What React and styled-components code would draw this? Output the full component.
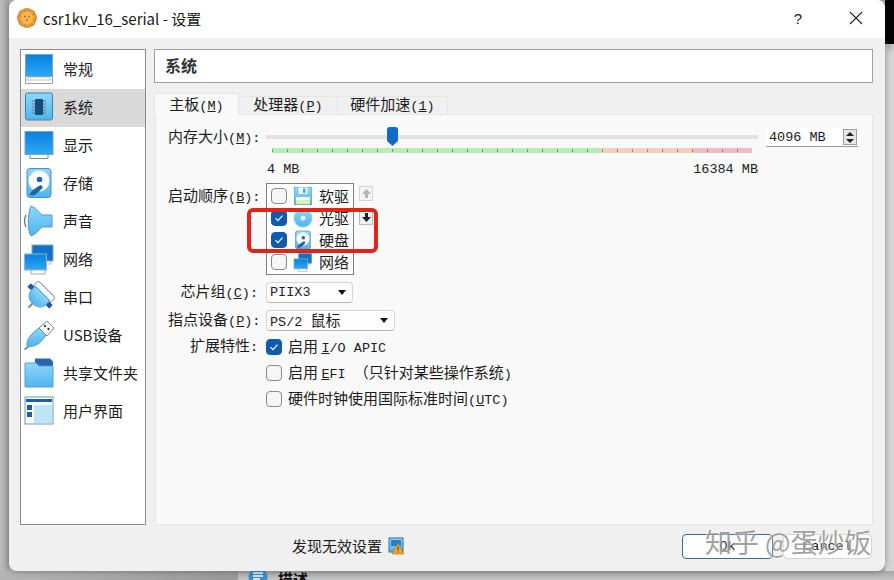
import React from "react"
import styled, { createGlobalStyle } from "styled-components"

const GlobalStyle = createGlobalStyle`
  html, body {
    margin: 0;
    padding: 0;
    background: #b4b4b4;
  }
  body {
    font-family: "Noto Sans CJK SC", "Liberation Sans", sans-serif;
    font-size: 15px;
    color: #1c1c1c;
  }
`

const Page = styled.div`
  width: 894px;
  height: 580px;
  display: grid;
  grid-template-columns: 9px 876px 9px;
  grid-template-rows: 571px 9px;
  overflow: hidden;
`

const LeftEdge = styled.div`
  background: linear-gradient(90deg, #bdbdbd, #a4a4a4);
`

const RightEdge = styled.div`
  display: flex;
  flex-direction: column;
  background: #d4d4d4;
`

const RightEdgeBlack = styled.div`
  height: 44px;
  margin-bottom: 12px;
  background: #050505;
  box-shadow: 0 8px 4px -2px #aaa;
`

const BottomEdge = styled.div`
  grid-column: 1 / 4;
  display: flex;
  overflow: hidden;
`

const BottomLeft = styled.div`
  width: 238px;
  background: linear-gradient(90deg, #b4b4b4, #999);
`

const BottomRight = styled.div`
  flex: 1;
  display: flex;
  gap: 10px;
  padding-left: 10px;
  background: linear-gradient(180deg, #a6a6a6, #c6c6c6);
`

const BottomTitle = styled.span`
  font-weight: 700;
  font-size: 15px;
  line-height: 15px;
  color: #111;
`

const Dialog = styled.div`
  position: relative;
  display: flex;
  flex-direction: column;
  background: #f0f0f0;
  border-radius: 8px;
  box-shadow: 0 0 6px rgba(0, 0, 0, 0.35);
`

const TitleBar = styled.div`
  height: 38px;
  flex: none;
  box-sizing: border-box;
  display: flex;
  align-items: center;
  padding: 0 0 2px 8px;
  background: #fff;
  border-radius: 8px 8px 0 0;
`

const TitleText = styled.span`
  margin-left: 6px;
  font-size: 15px;
  flex: 1;
  color: #1a1a1a;
`

const TitleButton = styled.button`
  width: 58px;
  height: 36px;
  padding: 0;
  border: 0;
  background: none;
  font-family: "Liberation Sans", sans-serif;
  font-size: 15px;
  color: #222;
  display: flex;
  align-items: center;
  justify-content: center;
`

const Body = styled.div`
  flex: 1;
  min-height: 0;
  display: flex;
  gap: 8px;
  padding: 11px 12px 0 11px;
`

const Sidebar = styled.div`
  width: 126px;
  box-sizing: border-box;
  padding-top: 1px;
  background: #fff;
  border: 1px solid #8c8c8c;
`

const SideRow = styled.div`
  height: 38px;
  box-sizing: border-box;
  display: flex;
  align-items: center;
  gap: 8px;
  padding: 0 0 3px 2px;
  background: ${(p) => (p.$active ? "#d9d9d9" : "transparent")};
  white-space: nowrap;
`

const Main = styled.div`
  flex: 1;
  min-height: 0;
  display: flex;
  flex-direction: column;
`

const Header = styled.div`
  height: 34px;
  flex: none;
  box-sizing: border-box;
  display: flex;
  align-items: center;
  padding: 0 0 2px 10px;
  background: #fff;
  border: 1px solid #a0a0a0;
  font-size: 16px;
  font-weight: 700;
  color: #333;
`

const Tabs = styled.div`
  display: flex;
  flex: none;
  align-items: flex-end;
  height: 22px;
  margin-top: 10px;
  margin-bottom: -1px;
  position: relative;
  z-index: 1;
`

const Tab = styled.div`
  height: ${(p) => (p.$active ? "22px" : "19px")};
  width: ${(p) => p.$w}px;
  box-sizing: border-box;
  padding-top: ${(p) => (p.$active ? "3px" : "0")};
  text-align: center;
  line-height: 14px;
  white-space: nowrap;
  background: ${(p) => (p.$active ? "#f9f9f9" : "#f0f0f0")};
  border: 1px solid #e6e6e6;
  border-bottom: ${(p) => (p.$active ? "0" : "1px solid #e6e6e6")};
  border-left: ${(p) => (p.$active ? "1px solid #e6e6e6" : "0")};
`

const Pane = styled.div`
  flex: 1;
  min-height: 0;
  box-sizing: border-box;
  padding: 12px 0 0 12px;
  margin-left: 1px;
  background: #f9f9f9;
  border: 1px solid #e6e6e6;
  display: flex;
  flex-direction: column;
`

const Lat = styled.span`
  font-family: "Liberation Mono", monospace;
  font-size: 13.5px;
`

// lifts CJK text a little inside its centred row
const Cap = styled.span`
  margin-top: -2px;
`

const FormRow = styled.div`
  display: grid;
  grid-template-columns: 90px 1fr;
  column-gap: 8px;
  margin-top: ${(p) => p.$gap || 0}px;
`

const Label = styled.div`
  text-align: right;
  white-space: nowrap;
  height: 21px;
  line-height: 18px;
  padding-top: ${(p) => p.$top || 0}px;
`

const SliderWrap = styled.div`
  display: flex;
  align-items: flex-start;
  gap: 8px;
  height: 52px;
`

const SliderCol = styled.div`
  width: 492px;
`

const Track = styled.div`
  position: relative;
  height: 4px;
  margin-top: 8px;
  background: #e2e2e2;
`

const Thumb = styled.svg`
  position: absolute;
  left: 121px;
  top: -8px;
  width: 11px;
  height: 19px;
`

const Scale = styled.div`
  position: relative;
  height: 5px;
  margin: 9px 6px 0 6px;
  display: flex;
`

const ScalePart = styled.div`
  width: ${(p) => p.$w}px;
  background: ${(p) => p.$c};
`

const Ticks = styled.div`
  position: absolute;
  inset: 1px 0 1px 0;
  background: repeating-linear-gradient(90deg, #7d8b7d 0 1px, transparent 1px 15px);
`

const ScaleLabels = styled.div`
  display: flex;
  justify-content: space-between;
  height: 18px;
  margin-top: 8px;
  line-height: 18px;
  padding-left: 1px;
`

const SpinBox = styled.div`
  width: 92px;
  height: 19px;
  margin-top: 1px;
  box-sizing: border-box;
  display: flex;
  align-items: center;
  justify-content: space-between;
  padding: 0 1px 0 3px;
  background: #fff;
  border-bottom: 1px solid #9a9a9a;
`

const SpinButtons = styled.div`
  width: 14px;
  height: 16px;
  display: flex;
  flex-direction: column;
  align-items: center;
  justify-content: space-around;
  background: #e6e6e6;
  border: 1px solid #9c9c9c;
  box-sizing: border-box;
`

const Arrow = styled.span`
  width: 0;
  height: 0;
  border-left: 4px solid transparent;
  border-right: 4px solid transparent;
  border-${(p) => (p.$up ? "bottom" : "top")}: 4px solid #222;
`

const BootWrap = styled.div`
  position: relative;
  display: flex;
  gap: 5px;
`

const BootList = styled.div`
  width: 88px;
  height: 92px;
  box-sizing: border-box;
  padding-top: 1px;
  background: #fff;
  border: 1px solid #7f7f7f;
`

const BootItem = styled.div`
  height: 22px;
  display: flex;
  align-items: center;
  padding-left: 4px;
  gap: 6px;
  white-space: nowrap;
`

const MoveButtons = styled.div`
  display: flex;
  flex-direction: column;
  gap: 9px;
  padding-top: 3px;
`

const MoveButton = styled.div`
  width: 14px;
  height: 15px;
  box-sizing: border-box;
  display: flex;
  align-items: center;
  justify-content: center;
  background: ${(p) => (p.$disabled ? "#f4f4f4" : "#f0f0f0")};
  border: 1px solid ${(p) => (p.$disabled ? "#d6d6d6" : "#bbb")};
`

const Highlight = styled.div`
  position: absolute;
  left: -19px;
  top: 25px;
  width: 131px;
  height: 45px;
  box-sizing: border-box;
  border: 4px solid #e2231a;
  border-radius: 6px;
  pointer-events: none;
`

const Select = styled.div`
  width: ${(p) => p.$w}px;
  height: 21px;
  box-sizing: border-box;
  display: flex;
  align-items: center;
  justify-content: space-between;
  padding: 0 6px 0 3px;
  background: #fdfdfd;
  border: 1px solid #d4d4d4;
  border-bottom-color: #b4b4b4;
  border-radius: 4px;
  white-space: nowrap;
`

const CheckGroup = styled.div`
  display: flex;
  flex-direction: column;
  gap: 5px;
`

const CheckRow = styled.div`
  height: 21px;
  display: flex;
  align-items: center;
  gap: 6px;
  white-space: nowrap;
`

const Box = styled.span`
  width: 16px;
  height: 16px;
  flex: none;
  box-sizing: border-box;
  display: flex;
  align-items: center;
  justify-content: center;
  border-radius: 4px;
  background: ${(p) => (p.$on ? "#0f5cae" : "#f6f6f6")};
  border: 1px solid ${(p) => (p.$on ? "#0f5cae" : "#8a8a8a")};
`

const Footer = styled.div`
  height: 46px;
  flex: none;
  box-sizing: border-box;
  display: flex;
  align-items: center;
  padding: 0 13px 4px 283px;
`

const Warning = styled.div`
  display: flex;
  align-items: center;
  gap: 6px;
  margin-right: auto;
`

const DialogButton = styled.button`
  height: 25px;
  padding: 0;
  width: ${(p) => p.$w}px;
  margin-left: ${(p) => p.$ml || 0}px;
  background: ${(p) => (p.$primary ? "#fbfdfe" : "#fdfdfd")};
  border: 1px solid ${(p) => (p.$primary ? "#2e6f9e" : "#d4d4d4")};
  border-radius: 4px;
  font-family: "Liberation Mono", monospace;
  font-size: 13.5px;
  color: #111;
`

const Watermark = styled.div`
  position: absolute;
  left: 696px;
  top: 522px;
  font-size: 27px;
  line-height: 40px;
  white-space: nowrap;
  color: rgba(125, 125, 125, 0.72);
  text-shadow: 0 0 3px #fff;
  pointer-events: none;
`

const HiddenSvg = styled.svg`
  position: absolute;
  width: 0;
  height: 0;
`

const IconDefs = () => (
  <HiddenSvg>
    <defs>
      <linearGradient id="scr" x1="0" y1="0" x2="0" y2="1">
        <stop offset="0" stopColor="#0a7fe0" />
        <stop offset="1" stopColor="#2fa8f5" />
      </linearGradient>
      <linearGradient id="sky" x1="0" y1="0" x2="0" y2="1">
        <stop offset="0" stopColor="#8fd8fa" />
        <stop offset="1" stopColor="#4fb4ee" />
      </linearGradient>
    </defs>
  </HiddenSvg>
)

const Icon = ({ size = 32, children }) => (
  <svg width={size} height={size} viewBox="0 0 32 32" style={{ flex: "none" }}>
    {children}
  </svg>
)

const GeneralIcon = () => (
  <Icon>
    <path d="M2.5 21h27v9.5h-27z" fill="#fff" stroke="#9c9c9c" />
    <path d="M6 24h20l2 3H4z" fill="#fff" stroke="#c4c4c4" />
    <rect x="2.5" y="1.5" width="27" height="22" fill="url(#scr)" stroke="#7aa5c0" />
  </Icon>
)

const SystemIcon = () => (
  <Icon>
    <rect x="2.5" y="2" width="27" height="27" rx="2" fill="url(#sky)" stroke="#3d80b0" />
    <path d="M9 10h14M9 13h14M9 16h14M9 19h14M9 22h14" stroke="#5a7f98" strokeWidth="1" />
    <rect x="12" y="8" width="8" height="16" rx="1" fill="#174a78" />
  </Icon>
)

const DisplayIcon = () => (
  <Icon>
    <path d="M7 24h18v5.5H7z" fill="#fff" stroke="#5d93b8" />
    <rect x="2" y="2.5" width="28" height="23" fill="url(#scr)" stroke="#7aa5c0" />
  </Icon>
)

const DiskIcon = ({ size }) => (
  <Icon size={size}>
    <rect x="4" y="1.5" width="24" height="29" rx="3" fill="url(#sky)" stroke="#4b8fbe" />
    <circle cx="16" cy="14" r="10.5" fill="#fff" />
    <circle cx="16.5" cy="12.5" r="2.8" fill="#1a66ad" />
    <path d="M6 28c3-5 7-8 12-10l2 2.5c-3 3-6 6-9 8z" fill="#1a66ad" />
  </Icon>
)

const AudioIcon = () => (
  <Icon>
    <path d="M8 1C5 6 4 26 8 31c4-1 8-6 11-9h10V10H19C16 7 12 2 8 1z" fill="url(#sky)" stroke="#4b9fd4" />
    <path d="M3 10c-2 4-2 8 0 12" fill="none" stroke="#5b7a90" strokeWidth="1.3" />
  </Icon>
)

const NetworkIcon = ({ size }) => (
  <Icon size={size}>
    <path d="M23 17h5v4h-5z" fill="#fff" stroke="#b8b8b8" />
    <rect x="9" y="2" width="21" height="16" fill="#1273c6" stroke="#82a8c4" />
    <path d="M8 26h14v5H8z" fill="#fff" stroke="#a8a8a8" />
    <rect x="1.5" y="11" width="22" height="16" fill="url(#scr)" stroke="#8fb4cc" />
  </Icon>
)

const SerialIcon = () => (
  <Icon>
    <g transform="rotate(45 16 16)">
      <rect x="4" y="5" width="24" height="7" fill="#fff" stroke="#8a9aa6" />
      <path d="M6 11h20v6c0 5-4 8-10 8s-10-3-10-8z" fill="url(#sky)" stroke="#4b9fd4" />
      <rect x="0.5" y="12" width="5" height="5" rx="1" fill="#1f5aa0" />
      <rect x="26.5" y="12" width="5" height="5" rx="1" fill="#1f5aa0" />
      <path d="M16 25v6" stroke="#5b8cb0" strokeWidth="2" />
    </g>
  </Icon>
)

const UsbIcon = () => (
  <Icon>
    <path d="M1.5 30.5l4-3" stroke="#5b8cb0" strokeWidth="1.6" />
    <path d="M4 27c-1-7 5-13 12-18l7 7c-4 7-11 13-19 11z" fill="url(#sky)" stroke="#4b9fd4" />
    <path d="M16 9l8-7 7 7-7 8z" fill="#fff" stroke="#6f8495" />
    <rect x="21" y="6" width="2" height="2" fill="#333" transform="rotate(45 22 7)" />
    <rect x="24.5" y="9" width="2" height="2" fill="#333" transform="rotate(45 25.5 10)" />
  </Icon>
)

const FolderIcon = () => (
  <Icon>
    <path d="M12 1.5h15l3 3v5H12z" fill="#2566ac" />
    <path d="M2 6h11l3 3h14v21H2z" fill="url(#sky)" stroke="#5a9cc8" />
  </Icon>
)

const UiIcon = () => (
  <Icon>
    <rect x="2" y="2" width="28" height="27" fill="#fff" stroke="#5d9cc8" />
    <rect x="3" y="4" width="26" height="3" fill="#1d5fa5" />
    <rect x="4" y="10" width="5" height="5" fill="#1d5fa5" />
    <rect x="4" y="17" width="5" height="5" fill="#1d5fa5" />
    <rect x="11" y="10" width="18" height="18" fill="#bfe3f7" />
  </Icon>
)

const FloppyIcon = ({ size }) => (
  <Icon size={size}>
    <rect x="2" y="2" width="28" height="28" fill="url(#sky)" stroke="#4b9fd4" />
    <rect x="9" y="2.5" width="14" height="10" fill="#fff" />
    <rect x="16" y="4" width="4" height="7" fill="#4b9fd4" />
    <rect x="5" y="18" width="22" height="11" fill="#d9f3b4" />
    <rect x="5" y="18" width="22" height="4" fill="#fff" />
  </Icon>
)

const DiscIcon = ({ size }) => (
  <Icon size={size}>
    <circle cx="16" cy="16" r="14.5" fill="url(#sky)" stroke="#7cc4ea" />
    <circle cx="16" cy="16" r="5" fill="#d8f0fb" stroke="#5ba8d8" />
    <circle cx="16" cy="16" r="1.6" fill="#fff" />
  </Icon>
)

const FlowerIcon = () => (
  <svg width="20" height="20" viewBox="0 0 20 20" style={{ flex: "none" }}>
    {[0, 45, 90, 135, 180, 225, 270, 315].map((a) => (
      <circle key={a} cx="10" cy="4.2" r="4" fill="#ee9a35" stroke="#a9662b" strokeWidth="0.5" transform={`rotate(${a} 10 10)`} />
    ))}
    <circle cx="10" cy="10" r="6.4" fill="#f8b651" />
    <circle cx="8" cy="8.5" r="0.9" fill="#b06a20" />
    <circle cx="12" cy="9" r="0.9" fill="#b06a20" />
    <circle cx="10" cy="12" r="0.9" fill="#b06a20" />
  </svg>
)

const WarningIcon = () => (
  <svg width="17" height="18" viewBox="0 0 17 18">
    <rect x="1" y="1" width="14" height="14" fill="url(#sky)" stroke="#2d6ea6" />
    <rect x="3" y="3" width="10" height="6" fill="#1f7fd0" />
    <path d="M10 6l6 11H4z" fill="#f3a32c" stroke="#b86e12" strokeWidth="0.6" />
    <path d="M10 9.5v4M10 14.5v1" stroke="#5a3200" strokeWidth="1" />
  </svg>
)

const Check = () => (
  <svg width="10" height="10" viewBox="0 0 10 10">
    <path d="M1.5 5.2l2.4 2.4 4.6-5" fill="none" stroke="#fff" strokeWidth="1.2" />
  </svg>
)

const CheckBox = ({ on }) => <Box $on={on}>{on && <Check />}</Box>

const Caret = () => (
  <svg width="8" height="5" viewBox="0 0 8 5">
    <path d="M0 0h8L4 5z" fill="#111" />
  </svg>
)

const MoveArrow = ({ down, color }) => (
  <svg width="9" height="9" viewBox="0 0 9 9">
    <path d={down ? "M3 0h3v4h3L4.5 9 0 4h3z" : "M3 9h3V5h3L4.5 0 0 5h3z"} fill={color} />
  </svg>
)

const navItems = [
  ["常规", GeneralIcon],
  ["系统", SystemIcon],
  ["显示", DisplayIcon],
  ["存储", DiskIcon],
  ["声音", AudioIcon],
  ["网络", NetworkIcon],
  ["串口", SerialIcon],
  ["USB设备", UsbIcon],
  ["共享文件夹", FolderIcon],
  ["用户界面", UiIcon],
]

const bootItems = [
  ["软驱", FloppyIcon, false],
  ["光驱", DiscIcon, true],
  ["硬盘", DiskIcon, true],
  ["网络", NetworkIcon, false],
]

export default function App() {
  return (
    <Page>
      <GlobalStyle />
      <IconDefs />
      <LeftEdge />
      <Dialog>
        <TitleBar>
          <FlowerIcon />
          <TitleText>csr1kv_16_serial - 设置</TitleText>
          <TitleButton>?</TitleButton>
          <TitleButton>
            <svg width="14" height="14" viewBox="0 0 14 14">
              <path d="M1 1l12 12M13 1L1 13" stroke="#222" strokeWidth="1.1" />
            </svg>
          </TitleButton>
        </TitleBar>
        <Body>
          <Sidebar>
            {navItems.map(([name, NavIcon]) => (
              <SideRow key={name} $active={name === "系统"}>
                <NavIcon />
                {name}
              </SideRow>
            ))}
          </Sidebar>
          <Main>
            <Header>系统</Header>
            <Tabs>
              <Tab $active $w={85}>
                主板<Lat>(<u>M</u>)</Lat>
              </Tab>
              <Tab $w={99}>
                处理器<Lat>(<u>P</u>)</Lat>
              </Tab>
              <Tab $w={110}>
                硬件加速<Lat>(<u>1</u>)</Lat>
              </Tab>
            </Tabs>
            <Pane>
              <FormRow>
                <Label>
                  内存大小<Lat>(<u>M</u>):</Lat>
                </Label>
                <SliderWrap>
                  <SliderCol>
                    <Track>
                      <Thumb viewBox="0 0 12 19" preserveAspectRatio="none">
                        <path d="M0 3a3 3 0 0 1 3-3h6a3 3 0 0 1 3 3v11l-6 5-6-5z" fill="#0f6cc4" />
                      </Thumb>
                    </Track>
                    <Scale>
                      <ScalePart $w={329} $c="#b7edb2" />
                      <ScalePart $w={92} $c="#f8d0ba" />
                      <ScalePart $w={59} $c="#f0bcbc" />
                      <Ticks />
                    </Scale>
                    <ScaleLabels>
                      <Lat>4 MB</Lat>
                      <Lat>16384 MB</Lat>
                    </ScaleLabels>
                  </SliderCol>
                  <SpinBox>
                    <Lat>4096 MB</Lat>
                    <SpinButtons>
                      <Arrow $up />
                      <Arrow />
                    </SpinButtons>
                  </SpinBox>
                </SliderWrap>
              </FormRow>
              <FormRow $gap={4}>
                <Label $top={3}>
                  启动顺序<Lat>(<u>B</u>):</Lat>
                </Label>
                <BootWrap>
                  <BootList>
                    {bootItems.map(([name, BootIcon, on]) => (
                      <BootItem key={name}>
                        <CheckBox on={on} />
                        <BootIcon size={20} />
                        <Cap>{name}</Cap>
                      </BootItem>
                    ))}
                  </BootList>
                  <MoveButtons>
                    <MoveButton $disabled>
                      <MoveArrow color="#b4b4b4" />
                    </MoveButton>
                    <MoveButton>
                      <MoveArrow down color="#222" />
                    </MoveButton>
                  </MoveButtons>
                  <Highlight />
                </BootWrap>
              </FormRow>
              <FormRow $gap={7}>
                <Label>
                  芯片组<Lat>(<u>C</u>):</Lat>
                </Label>
                <Select $w={87}>
                  <Lat>PIIX3</Lat>
                  <Caret />
                </Select>
              </FormRow>
              <FormRow $gap={7}>
                <Label>
                  指点设备<Lat>(<u>P</u>):</Lat>
                </Label>
                <Select $w={129}>
                  <Cap>
                    <Lat>PS/2 </Lat>鼠标
                  </Cap>
                  <Caret />
                </Select>
              </FormRow>
              <FormRow $gap={5}>
                <Label>
                  扩展特性<Lat>:</Lat>
                </Label>
                <CheckGroup>
                  <CheckRow>
                    <CheckBox on />
                    <Cap>
                      启用 <Lat><u>I</u>/O APIC</Lat>
                    </Cap>
                  </CheckRow>
                  <CheckRow>
                    <CheckBox />
                    <Cap>
                      启用 <Lat><u>E</u>FI </Lat>（只针对某些操作系统<Lat>)</Lat>
                    </Cap>
                  </CheckRow>
                  <CheckRow>
                    <CheckBox />
                    <Cap>
                      硬件时钟使用国际标准时间<Lat>(<u>U</u>TC)</Lat>
                    </Cap>
                  </CheckRow>
                </CheckGroup>
              </FormRow>
            </Pane>
          </Main>
        </Body>
        <Footer>
          <Warning>
            <Cap>发现无效设置</Cap>
            <WarningIcon />
          </Warning>
          <DialogButton $primary $w={91}>Ok</DialogButton>
          <DialogButton $w={89} $ml={10}>Cancel</DialogButton>
        </Footer>
        <Watermark>知乎 @蛋炒饭</Watermark>
      </Dialog>
      <RightEdge>
        <RightEdgeBlack />
      </RightEdge>
      <BottomEdge>
        <BottomLeft />
        <BottomRight>
          <svg width="20" height="20" viewBox="0 0 20 20">
            <circle cx="10" cy="6" r="9.5" fill="#3f8ec4" />
            <path d="M5 2h10M5 5h10M5 8h7" stroke="#fff" strokeWidth="1.4" />
          </svg>
          <BottomTitle>描述</BottomTitle>
        </BottomRight>
      </BottomEdge>
    </Page>
  )
}
